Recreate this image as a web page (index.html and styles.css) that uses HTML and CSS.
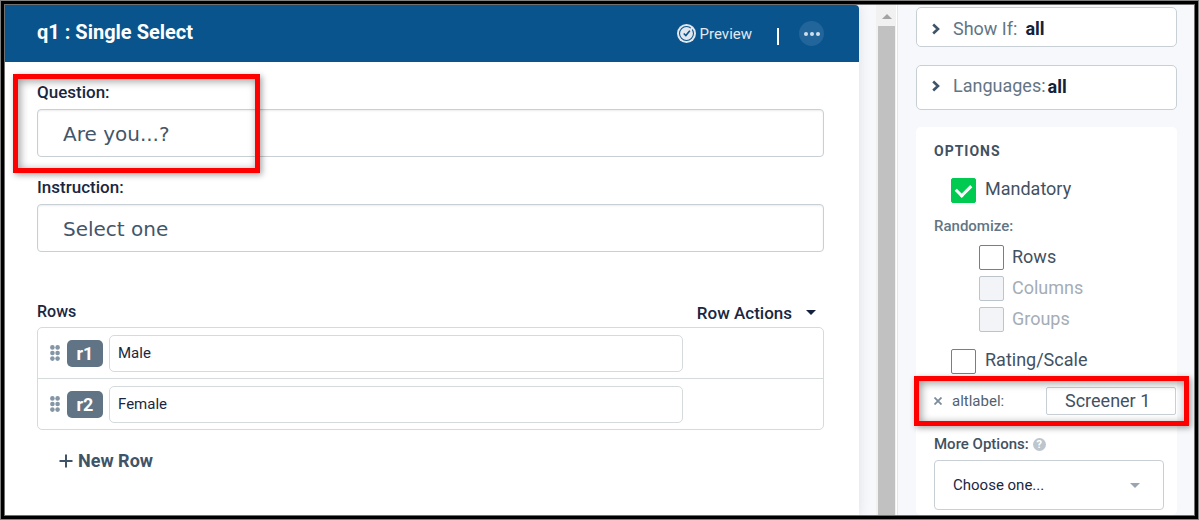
FILE: index.html
```html
<!DOCTYPE html>
<html lang="en">
<head>
<meta charset="utf-8">
<title>q1 : Single Select</title>
<link rel="stylesheet" href="styles.css">
</head>
<body>
<div class="frame">
<div class="app">
  <main class="editor">
    <section class="card">
      <header class="card-header">
        <h1 class="card-title">q1 : Single Select</h1>
        <div class="header-actions">
          <button class="preview" type="button">
            <svg width="19" height="19" viewBox="0 0 18 18" fill="none" aria-hidden="true">
              <circle cx="9" cy="9" r="9" fill="#e3e8ee"/>
              <circle cx="9" cy="9" r="6.6" stroke="#09548c" stroke-width="1"/>
              <path d="M6.400 9l2 2L12.300 6.200" stroke="#09548c" stroke-width="1.500"/>
              <path d="M12.200 6.200l2.600-2.900" stroke="#e3e8ee" stroke-width="1.800"/>
            </svg>
            Preview
          </button>
          <span class="divider"></span>
          <button class="more" type="button" aria-label="More actions">
            <svg width="16" height="4" viewBox="0 0 16 4" fill="#d3dfe8"><circle cx="2" cy="2" r="2"/><circle cx="8" cy="2" r="2"/><circle cx="14" cy="2" r="2"/></svg>
          </button>
        </div>
      </header>
      <div class="card-body">
        <div class="field marked">
          <label for="question">Question:</label>
          <input id="question" class="text-field" type="text" value="Are you...?">
          <span class="highlight highlight-question"></span>
        </div>
        <div class="field">
          <label for="instruction">Instruction:</label>
          <input id="instruction" class="text-field" type="text" value="Select one">
        </div>
        <div class="rows-head">
          <h2 class="rows-title">Rows</h2>
          <button class="row-actions" type="button">Row Actions
            <svg width="10" height="5" viewBox="0 0 10 5" aria-hidden="true"><path d="M0 0h10L5 5z" fill="#14213d"/></svg>
          </button>
        </div>
        <ul class="rows">
          <li class="row">
            <svg class="grip" width="10" height="16" viewBox="0 0 10 16" aria-hidden="true"><g fill="#8495a5"><circle cx="2.4" cy="2.4" r="2.3"/><circle cx="7.6" cy="2.4" r="2.3"/><circle cx="2.4" cy="8" r="2.3"/><circle cx="7.6" cy="8" r="2.3"/><circle cx="2.4" cy="13.6" r="2.3"/><circle cx="7.6" cy="13.6" r="2.3"/></g></svg>
            <label class="badge" for="r1">r1</label>
            <input id="r1" class="row-input" type="text" value="Male">
          </li>
          <li class="row">
            <svg class="grip" width="10" height="16" viewBox="0 0 10 16" aria-hidden="true"><g fill="#8495a5"><circle cx="2.4" cy="2.4" r="2.3"/><circle cx="7.6" cy="2.4" r="2.3"/><circle cx="2.4" cy="8" r="2.3"/><circle cx="7.6" cy="8" r="2.3"/><circle cx="2.4" cy="13.6" r="2.3"/><circle cx="7.6" cy="13.6" r="2.3"/></g></svg>
            <label class="badge" for="r2">r2</label>
            <input id="r2" class="row-input" type="text" value="Female">
          </li>
        </ul>
        <button class="new-row" type="button">
          <svg width="14" height="14" viewBox="0 0 14 14" aria-hidden="true"><path d="M7 .5v13M.5 7h13" stroke="#3f5468" stroke-width="2"/></svg>
          New Row
        </button>
      </div>
    </section>
  </main>
  <div class="scrollbar" aria-hidden="true">
    <svg width="10" height="5" viewBox="0 0 10 5"><path d="M0 5h10L5 0z" fill="#a3a3a3"/></svg>
    <div class="thumb"></div>
  </div>
  <aside class="sidebar">
    <button class="panel panel-show" type="button">
      <svg width="8" height="12" viewBox="0 0 8 12" fill="none" aria-hidden="true"><path d="M1.2 1.5L6 6l-4.800 4.500" stroke="#3f5468" stroke-width="2.600"/></svg>
      <span>Show If:</span><strong>all</strong>
    </button>
    <button class="panel panel-languages" type="button">
      <svg width="8" height="12" viewBox="0 0 8 12" fill="none" aria-hidden="true"><path d="M1.2 1.5L6 6l-4.800 4.500" stroke="#3f5468" stroke-width="2.600"/></svg>
      <span>Languages:</span><strong>all</strong>
    </button>
    <section class="options">
      <h2 class="options-title">Options</h2>
      <div class="options-body">
        <label class="check"><input type="checkbox" checked>Mandatory</label>
        <fieldset class="randomize">
          <legend>Randomize:</legend>
          <label class="check"><input type="checkbox">Rows</label>
          <label class="check off"><input type="checkbox" disabled>Columns</label>
          <label class="check off"><input type="checkbox" disabled>Groups</label>
        </fieldset>
        <label class="check rating"><input type="checkbox">Rating/Scale</label>
        <div class="alt marked">
          <button class="remove" type="button" aria-label="Remove altlabel">
            <svg width="8" height="8" viewBox="0 0 8 8"><path d="M.5.5l7 7M7.500.500l-7 7" stroke="#7b8c9c" stroke-width="1.800"/></svg>
          </button>
          <label for="altlabel">altlabel:</label>
          <input id="altlabel" type="text" value="Screener 1">
          <span class="highlight highlight-alt"></span>
        </div>
        <div class="more-head">
          <label for="more-options">More Options:</label>
          <span class="help">?</span>
        </div>
        <div class="select-wrap">
          <select id="more-options"><option>Choose one...</option></select>
          <svg width="10" height="5" viewBox="0 0 10 5" aria-hidden="true"><path d="M0 0h10L5 5z" fill="#9aa5b1"/></svg>
        </div>
      </div>
    </section>
  </aside>
</div>
</div>
</body>
</html>
```
FILE: styles.css
```css
* { box-sizing: border-box; }
body { margin: 0; font-family: Roboto, "Liberation Sans", sans-serif; color: #1a2740; }
button, input, select { font: inherit; color: inherit; margin: 0; }
button { background: none; border: 0; padding: 0; display: flex; align-items: center; text-align: left; }
h1, h2 { margin: 0; }

.frame { height: 100vh; border: 1px solid #808080; background: #000; padding: 3px; }
.app { height: 100%; display: flex; border: 1px solid #707070; background: #f7f8fb; overflow: hidden; }

.editor { flex: 1; min-width: 0; padding-right: 17px; display: flex; }
.card { flex: 1; min-width: 0; background: #fff; border-radius: 0 4px 0 0; box-shadow: 0 0 12px rgba(40, 60, 90, .13); }
.card-header { height: 57px; padding: 0 35px 0 32px; background: #09548c; border-radius: 0 4px 0 0; color: #fff; display: flex; align-items: center; justify-content: space-between; }
.card-title { font-size: 20px; line-height: 24px; font-weight: 700; padding-bottom: 3px; }
.header-actions { display: flex; align-items: center; }
.preview { gap: 4px; font-size: 15px; color: #e3e8ee; }
.divider { width: 2px; height: 17px; margin: 6px 20px 0 25px; background: #fff; }
.more { width: 25px; height: 25px; border-radius: 50%; background: #22659a; justify-content: center; }

.card-body { padding: 20px 35px 0 32px; }
.field { display: grid; gap: 7px; margin-bottom: 20px; }
.field label { font-size: 17px; line-height: 20px; font-weight: 500; }
.text-field { width: 100%; height: 48px; padding: 2px 25px 0; border: 1px solid #c8d0d5; border-radius: 4px; background: #fff; box-shadow: inset 0 1px 2px rgba(0, 0, 0, .08); font: 20px "DejaVu Sans", sans-serif; color: #42566b; }

.marked { position: relative; }
.highlight { position: absolute; border: 5px solid #f00; box-shadow: 2px 2px 6px rgba(0, 0, 0, .35), inset 2px 2px 8px rgba(0, 0, 0, .4); pointer-events: none; }
.highlight-question { left: -24px; top: -8px; bottom: -16px; width: 247px; }
.highlight-alt { left: -20px; right: -13px; top: -11px; bottom: -11px; }

.rows-head { display: flex; align-items: center; justify-content: space-between; margin-top: 48px; padding-right: 8px; height: 27px; }
.rows-title { font-size: 16px; line-height: 20px; font-weight: 500; padding-bottom: 4px; }
.row-actions { gap: 14px; font-size: 17px; line-height: 24px; font-weight: 500; padding-bottom: 2px; }
.rows { list-style: none; margin: 0; padding: 0; border: 1px solid #d5dadd; border-radius: 5px; }
.row { display: grid; grid-template-columns: 11px 36px minmax(0, 574px); column-gap: 6px; align-items: center; height: 50px; padding: 0 12px; }
.row + .row { height: 51px; border-top: 1px solid #d5dadd; }
.badge { height: 27px; border-radius: 5px; background: #617485; color: #fff; font-size: 18px; line-height: 27px; font-weight: 700; text-align: center; }
.row-input { width: 100%; height: 37px; padding: 0 8px; border: 1px solid #d5dadd; border-radius: 5px; background: #fff; font-size: 15px; }
.new-row { margin: 19px 0 0 22px; gap: 5px; font-size: 18px; line-height: 24px; font-weight: 700; color: #3f5468; }

.scrollbar { width: 20px; padding: 9px 1px 0 2px; background: #f1f1f1; display: flex; flex-direction: column; align-items: center; gap: 7px; }
.thumb { flex: 1; width: 100%; background: #c1c1c1; }

.sidebar { width: 298px; padding: 2px 17px 0 19px; border-left: 1px solid #fff; box-shadow: inset 1px 0 #e4e7ea; display: flex; flex-direction: column; color: #42515f; }
.panel { padding: 0 15px; flex: none; border: 1px solid #c8d0d5; border-radius: 5px; background: #fff; font-size: 18px; line-height: 24px; }
.panel span { color: #637585; margin-left: 13px; }
.panel strong { font-weight: 700; color: #14213d; }
.panel-show { height: 40px; padding-top: 3px; }
.panel-show strong { margin-left: 8px; }
.panel-languages { height: 45px; margin: 18px 0 17px; padding-bottom: 3px; }
.panel-languages strong { margin-left: 2px; padding-top: 2px; }
.options { background: #fff; border-radius: 5px; flex: 1; }
.options-title { padding: 14px 18px 9px; font-size: 14px; line-height: 20px; font-weight: 700; letter-spacing: 1px; text-transform: uppercase; }
.options-body { padding: 8px 13px 0 18px; }
.check { display: flex; gap: 9px; margin-left: 17px; font-size: 18px; line-height: 22px; color: #42515f; }
.check input { appearance: none; width: 25px; height: 25px; border: 1px solid #718090; border-radius: 2px; background: #fff; flex: none; display: grid; place-items: center; }
.check input:checked { background: #00cb50; border-color: #00cb50; }
.check input:checked::after { content: ""; width: 12px; height: 7px; border: solid #fff; border-width: 0 0 3px 3px; transform: rotate(-45deg); margin-bottom: 3px; }
.check.off { color: #a4adb6; }
.check.off input { background: #f2f4f7; border-color: #bdc5cc; }
.randomize { border: 0; min-width: 0; margin: 13px 0 17px; padding: 0 0 0 28px; display: grid; gap: 6px; }
.randomize .check { gap: 8px; line-height: 24px; height: 25px; }
.randomize legend { margin: 0 0 9px -28px; padding: 0; font-size: 15px; line-height: 20px; font-weight: 500; color: #637585; }
.alt { display: flex; align-items: center; margin-top: 13px; margin-right: -12px; font-size: 15px; color: #52616f; }
.remove { width: 18px; height: 20px; }
.alt label { flex: 1; }
.alt input { width: 130px; height: 28px; padding: 0 18px 1px; border: 1px solid #c8d0d5; border-radius: 2px; background: #fff; font-size: 18px; color: #42515f; }
.more-head { display: flex; align-items: center; gap: 4px; margin: 19px 0 6px; font-size: 15px; line-height: 20px; font-weight: 500; }
.help { width: 13px; height: 13px; border-radius: 50%; background: #bdc6cd; color: #fff; font-size: 11px; line-height: 13px; font-weight: 700; text-align: center; }
.select-wrap { display: grid; align-items: center; }
.select-wrap select, .select-wrap svg { grid-area: 1 / 1; }
.select-wrap select { appearance: none; width: 100%; height: 50px; padding: 0 18px; border: 1px solid #c8d0d5; border-radius: 4px; background: #fff; font-size: 15px; color: #1a2740; }
.select-wrap svg { justify-self: end; margin-right: 24px; pointer-events: none; }
```
